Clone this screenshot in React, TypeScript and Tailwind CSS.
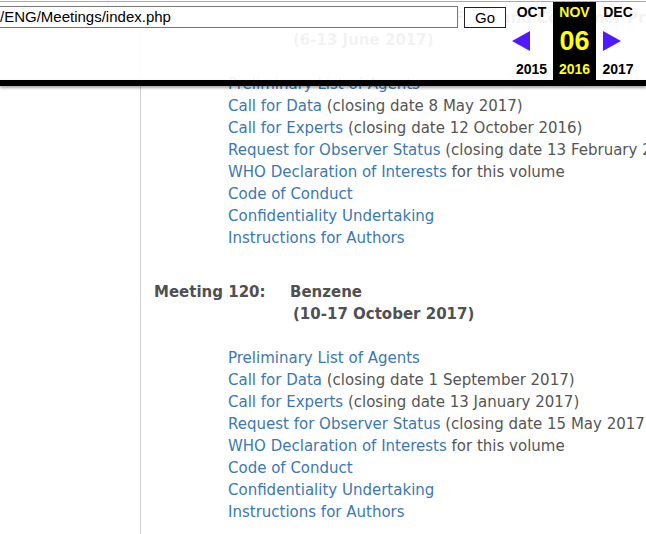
import React from 'react';

type Item = { link: string; note?: string };

const MEETING_119: Item[] = [
  { link: 'Preliminary List of Agents' },
  { link: 'Call for Data', note: '(closing date 8 May 2017)' },
  { link: 'Call for Experts', note: '(closing date 12 October 2016)' },
  { link: 'Request for Observer Status', note: '(closing date 13 February 2017)' },
  { link: 'WHO Declaration of Interests', note: 'for this volume' },
  { link: 'Code of Conduct' },
  { link: 'Confidentiality Undertaking' },
  { link: 'Instructions for Authors' },
];

const MEETING_120: Item[] = [
  { link: 'Preliminary List of Agents' },
  { link: 'Call for Data', note: '(closing date 1 September 2017)' },
  { link: 'Call for Experts', note: '(closing date 13 January 2017)' },
  { link: 'Request for Observer Status', note: '(closing date 15 May 2017)' },
  { link: 'WHO Declaration of Interests', note: 'for this volume' },
  { link: 'Code of Conduct' },
  { link: 'Confidentiality Undertaking' },
  { link: 'Instructions for Authors' },
];

function Meeting({ label, title, dates, items, className }: { label: string; title: string; dates: string; items: Item[]; className?: string }) {
  return (
    <div className={className}>
      <div className="flex font-bold text-[#505050]">
        <div className="w-[136px] shrink-0">{label}</div>
        <div>
          <div>{title}</div>
          <div className="ml-[3px]">{dates}</div>
        </div>
      </div>
      <ul className="mt-[22px] pl-[74px]">
        {items.map((it) => (
          <li key={it.link}>
            <a href="#" className="text-[#3b78b4]">{it.link}</a>
            {it.note && <span className="text-[#555]"> {it.note}</span>}
          </li>
        ))}
      </ul>
    </div>
  );
}

function Arrow({ dir }: { dir: 'left' | 'right' }) {
  return (
    <svg width="18" height="20" viewBox="0 0 18 20">
      <polygon points={dir === 'left' ? '18,0 18,20 0,10' : '0,0 0,20 18,10'} fill="#5019ff" />
    </svg>
  );
}

function Toolbar() {
  return (
    <div className="absolute inset-x-0 top-0">
      <div className="h-px bg-white/[0.93]" />
      <div className="h-px bg-[#a8a8a8]" />
      <div className="flex h-[78px] bg-white/[0.93] font-['Liberation_Sans',Arial,sans-serif]">
        <div className="-ml-[2px] mt-[4px] flex h-[22px] w-[460px] items-center border border-[#767676] bg-white pl-[1px] text-[15px] text-black">
          /ENG/Meetings/index.php
        </div>
        <button type="button" className="ml-[6px] mt-[5px] flex h-[21px] w-[42px] items-center justify-center border border-[#222] bg-white text-[15px] text-black">
          Go
        </button>
        <div className="ml-[4px] flex font-bold text-black">
          <div className="flex w-[43px] flex-col">
            <div className="flex h-[20px] items-center justify-center text-[14px]">OCT</div>
            <div className="flex h-[38px] items-center pl-[2px]"><Arrow dir="left" /></div>
            <div className="flex h-[18px] items-center justify-center text-[14px]">2015</div>
          </div>
          <div className="flex w-[43px] flex-col bg-black text-[#ffff1a]">
            <div className="flex h-[20px] items-center justify-center text-[14px]">NOV</div>
            <div className="flex h-[38px] items-center justify-center text-[27px]">06</div>
            <div className="flex h-[18px] items-center justify-center text-[14px]">2016</div>
          </div>
          <div className="flex w-[44px] flex-col">
            <div className="flex h-[20px] items-center justify-center text-[14px]">DEC</div>
            <div className="flex h-[38px] items-center pl-[7px]"><Arrow dir="right" /></div>
            <div className="flex h-[18px] items-center justify-center text-[14px]">2017</div>
          </div>
        </div>
      </div>
      <div className="h-[6px] bg-black shadow-[0_2px_3px_rgba(0,0,0,0.35)]" />
    </div>
  );
}

export default function App() {
  return (
    <div className="relative h-[534px] w-[646px] overflow-hidden whitespace-nowrap bg-white font-['DejaVu_Sans',Verdana,sans-serif] text-[15px] leading-[22px]">
      <div className="ml-[140px] min-h-full border-l border-[#d0d0d0] pl-[13px] pt-[7px]">
        <Meeting label="Meeting 119:" title="Some Chemicals in Food and Consumer Products" dates="(6-13 June 2017)" items={MEETING_119} />
        <Meeting label="Meeting 120:" title="Benzene" dates="(10-17 October 2017)" items={MEETING_120} className="mt-[32px]" />
      </div>
      <Toolbar />
    </div>
  );
}
